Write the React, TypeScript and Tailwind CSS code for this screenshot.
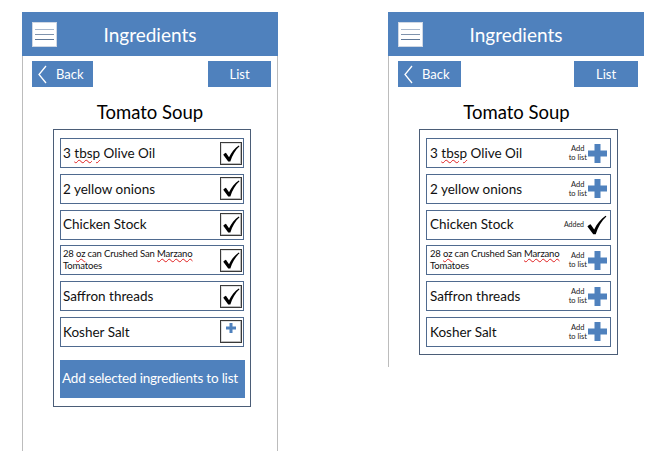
import React from "react";

const F = { fontFamily: "Lato, 'Liberation Sans', sans-serif" };

function Hamburger() {
  return (
    <div className="w-[25px] h-[25px] bg-white border border-[#d0d8e4] flex flex-col justify-center items-center gap-[4px] justify-self-start">
      <div className="w-[19px] h-px bg-[#a9b8cc]" />
      <div className="w-[19px] h-px bg-[#7f93ad]" />
      <div className="w-[19px] h-px bg-[#5f7898]" />
    </div>
  );
}

function Header() {
  return (
    <div className="h-[44px] mt-[12px] bg-[#4f81bd] grid grid-cols-[1fr_auto_1fr] items-center px-[10px]">
      <Hamburger />
      <div className="text-white text-[19px] leading-none" style={F}>Ingredients</div>
      <div />
    </div>
  );
}

function NavButtons({ backW, listW, pr }: { backW: string; listW: string; pr: string }) {
  return (
    <div className={`flex justify-between pt-[5px] pl-[9px] ${pr}`}>
      <div className={`${backW} h-[26px] bg-[#4f81bd] flex items-center pl-[6px] gap-[9px]`}>
        <svg width="9" height="19" viewBox="0 0 9 19">
          <path d="M8 1 L1 9.5 L8 18" fill="none" stroke="white" strokeWidth="1.3" />
        </svg>
        <span className="text-white text-[13px] leading-none" style={F}>Back</span>
      </div>
      <div className={`${listW} h-[26px] bg-[#4f81bd] flex items-center justify-center`}>
        <span className="text-white text-[13px] leading-none" style={F}>List</span>
      </div>
    </div>
  );
}

function Title() {
  return (
    <div className="mt-[13px] mb-[5px] h-[24px] leading-[24px] text-center text-[18.5px] text-black" style={F}>
      Tomato Soup
    </div>
  );
}

function Check({ w = 18, h = 20 }: { w?: number; h?: number }) {
  return (
    <svg width={w} height={h} viewBox="0 0 22 22">
      <path
        d="M1.5 12.5 C2.5 11.3 3.6 10.6 4.8 10.2 L8.6 15.6 C11.5 9.5 15.5 4.6 20.5 1.2 L21.4 2.2 C16.3 6.8 12.6 13 10.2 20.8 L7.6 20.8 Z"
        fill="#000"
      />
    </svg>
  );
}

function Plus({ size, arm }: { size: number; arm: number }) {
  const o = (size - arm) / 2;
  return (
    <svg width={size} height={size} viewBox={`0 0 ${size} ${size}`}>
      <rect x={o} y={0} width={arm} height={size} fill="#4f81bd" />
      <rect x={0} y={o} width={size} height={arm} fill="#4f81bd" />
    </svg>
  );
}

function Box({ checked }: { checked: boolean }) {
  return (
    <div className="w-[22px] h-[23px] border border-[#3a3a3a] bg-white shadow-[inset_-1px_-1px_0_#bdbdbd,inset_1px_1px_0_#e0e0e0] flex justify-center items-start shrink-0">
      {checked ? (
        <div className="pt-[1px]"><Check w={18} h={19} /></div>
      ) : (
        <div className="pt-[2px]"><Plus size={10} arm={3} /></div>
      )}
    </div>
  );
}

const sq = "underline decoration-wavy decoration-[#e02020] decoration-1 underline-offset-[1px]";
const nm = "text-[13.5px] leading-none text-[#111] whitespace-nowrap pt-[1px]";

function Name({ id }: { id: number }) {
  if (id === 0)
    return (
      <span className={nm} style={F}>
        3 <span className={sq}>tbsp</span> Olive Oil
      </span>
    );
  if (id === 1)
    return <span className={nm} style={F}>2 yellow onions</span>;
  if (id === 2)
    return <span className={nm} style={F}>Chicken Stock</span>;
  if (id === 3)
    return (
      <span className="text-[9.5px] leading-[12.5px] text-[#111] tracking-[-0.15px] whitespace-nowrap" style={F}>
        28 <span className={sq}>oz</span> can Crushed San <span className={sq}>Marzano</span>
        <br />
        Tomatoes
      </span>
    );
  if (id === 4)
    return <span className={nm} style={F}>Saffron threads</span>;
  return <span className={nm} style={F}>Kosher Salt</span>;
}

function AddToList() {
  return (
    <div className="flex items-center gap-[1px]">
      <div className="flex flex-col items-center text-[7.5px] leading-[9px] text-[#222]" style={F}>
        <span>Add</span>
        <span>to list</span>
      </div>
      <Plus size={19} arm={6} />
    </div>
  );
}

function Added() {
  return (
    <div className="flex items-center gap-[2px]">
      <span className="text-[7px] leading-none text-[#222]" style={F}>Added</span>
      <Check w={21} h={22} />
    </div>
  );
}

function LeftPhone() {
  return (
    <div className="w-[256px] shrink-0">
      <Header />
      <div className="h-[395px] border-x border-[#bcbcbc]">
        <NavButtons backW="w-[61px]" listW="w-[63px]" pr="pr-[6px]" />
        <Title />
        <div className="ml-[30px] w-[198px] border border-[#4b5d77] pt-[8px] px-[6px] pb-[8px]">
          <div className="flex flex-col gap-[5.8px]">
            {[0, 1, 2, 3, 4, 5].map((i) => (
              <div key={i} className="h-[30px] border border-[#4f6a8f] flex items-center justify-between pl-[2px] pr-[1px]">
                <Name id={i} />
                <Box checked={i !== 5} />
              </div>
            ))}
          </div>
          <div className="mt-[13px] h-[38px] w-[185px] bg-[#4f81bd] flex items-center pl-[2px]">
            <span className="text-white text-[13.5px] leading-none whitespace-nowrap tracking-[-0.2px]" style={F}>
              Add selected ingredients to list
            </span>
          </div>
        </div>
      </div>
    </div>
  );
}

function RightPhone() {
  return (
    <div className="w-[256px] shrink-0">
      <Header />
      <div className="h-[311px] border-l border-[#bcbcbc]">
        <NavButtons backW="w-[63px]" listW="w-[64px]" pr="pr-[6px]" />
        <Title />
        <div className="ml-[30px] w-[199px] border border-[#4b5d77] pt-[8px] px-[6px] pb-[7px]">
          <div className="flex flex-col gap-[5.8px]">
            {[0, 1, 2, 3, 4, 5].map((i) => (
              <div key={i} className="h-[30px] border border-[#4f6a8f] flex items-center justify-between pl-[3px] pr-[3px]">
                <Name id={i} />
                {i === 2 ? <Added /> : <AddToList />}
              </div>
            ))}
          </div>
        </div>
      </div>
    </div>
  );
}

export default function App() {
  return (
    <div className="w-[663px] h-[451px] bg-white flex items-start pl-[22px] gap-[110px] overflow-hidden">
      <LeftPhone />
      <RightPhone />
    </div>
  );
}
